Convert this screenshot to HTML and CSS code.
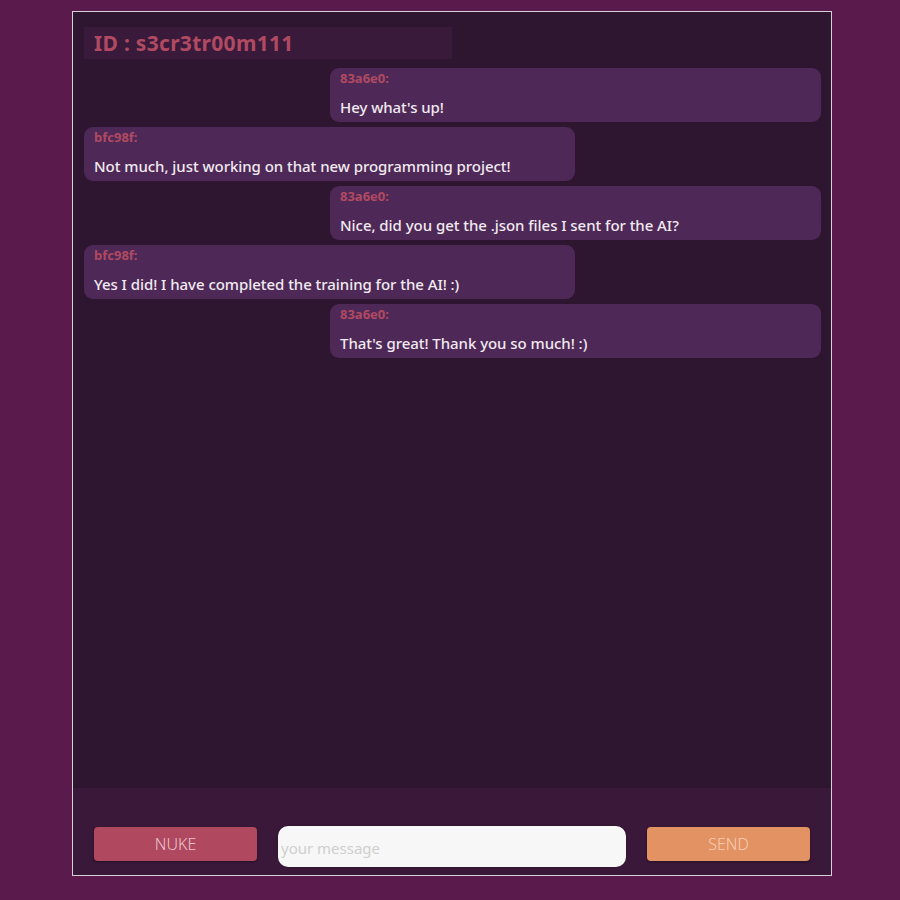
FILE: index.html
```html
<!DOCTYPE html>
<html>
<head>
<meta charset="utf-8">
<link rel="stylesheet" href="styles.css">
</head>
<body>
<div class="app">
  <div class="chat">
    <div class="room-id">ID : s3cr3tr00m111</div>
    <div class="messages">
      <div class="msg mine"><div class="author">83a6e0:</div><div class="text">Hey what's up!</div></div>
      <div class="msg theirs"><div class="author">bfc98f:</div><div class="text">Not much, just working on that new programming project!</div></div>
      <div class="msg mine"><div class="author">83a6e0:</div><div class="text">Nice, did you get the .json files I sent for the AI?</div></div>
      <div class="msg theirs"><div class="author">bfc98f:</div><div class="text">Yes I did! I have completed the training for the AI! :)</div></div>
      <div class="msg mine"><div class="author">83a6e0:</div><div class="text">That's great! Thank you so much! :)</div></div>
    </div>
  </div>
  <div class="footer">
    <button class="btn nuke">NUKE</button>
    <input class="input" type="text" placeholder="your message">
    <button class="btn send">SEND</button>
  </div>
</div>
</body>
</html>
```
FILE: styles.css
```css
* { box-sizing: border-box; }
html, body { margin: 0; padding: 0; }
body {
  background: #5a1a4b;
  font-family: "Noto Sans", "Open Sans", sans-serif;
  padding-top: 11px;
  height: 900px;
}
.app {
  margin-left: 72px;
  width: 760px;
  height: 865px;
  border: 1px solid #d8d0d8;
  background: #2e1630;
  display: flex;
  flex-direction: column;
}
.chat {
  flex: 1;
  padding: 15px 10px 0 11px;
  display: flex;
  flex-direction: column;
}
.room-id {
  width: 368px;
  height: 32px;
  background: #3a1a3b;
  color: #b04a62;
  font-weight: 700;
  font-size: 21px;
  line-height: 32px;
  padding-left: 10px;
  letter-spacing: 0.3px;
}
.messages {
  margin-top: 9px;
  display: flex;
  flex-direction: column;
  gap: 5px;
}
.msg {
  width: 491px;
  height: 54px;
  background: #4e2856;
  border-radius: 9px;
  padding: 2px 10px 0 10px;
}
.msg.mine { align-self: flex-end; }
.msg.theirs { align-self: flex-start; }
.author {
  color: #b04a62;
  font-size: 13px;
  font-weight: 700;
  line-height: 16px;
}
.text {
  color: #f1eaf0;
  font-size: 15px;
  line-height: 22px;
  margin-top: 10px;
  font-weight: 500;
  letter-spacing: -0.05px;
}
.footer {
  height: 87px;
  background: #3a1839;
  display: flex;
  align-items: flex-start;
  gap: 21px;
  padding: 38px 20px 0 21px;
}
.btn {
  width: 163px;
  height: 34px;
  margin-top: 1px;
  border: none;
  border-radius: 4px;
  font-family: "Noto Sans", "Open Sans", sans-serif;
  font-size: 16px;
  font-weight: 300;
  box-shadow: 0 1px 3px rgba(0,0,0,0.35);
  padding: 0;
}
.nuke { background: #b0485f; color: #ebc6cf; }
.send { background: #e39263; color: #f8cdb0; }
.input {
  width: 348px;
  height: 41px;
  border: none;
  border-radius: 10px;
  background: #f7f7f7;
  padding: 2px 3px 0;
  font-family: "Noto Sans", "Open Sans", sans-serif;
  font-size: 15px;
  box-shadow: 0 0 2px rgba(0,0,0,0.4);
  outline: none;
}
.input::placeholder { color: #cfcfcf; }
```
